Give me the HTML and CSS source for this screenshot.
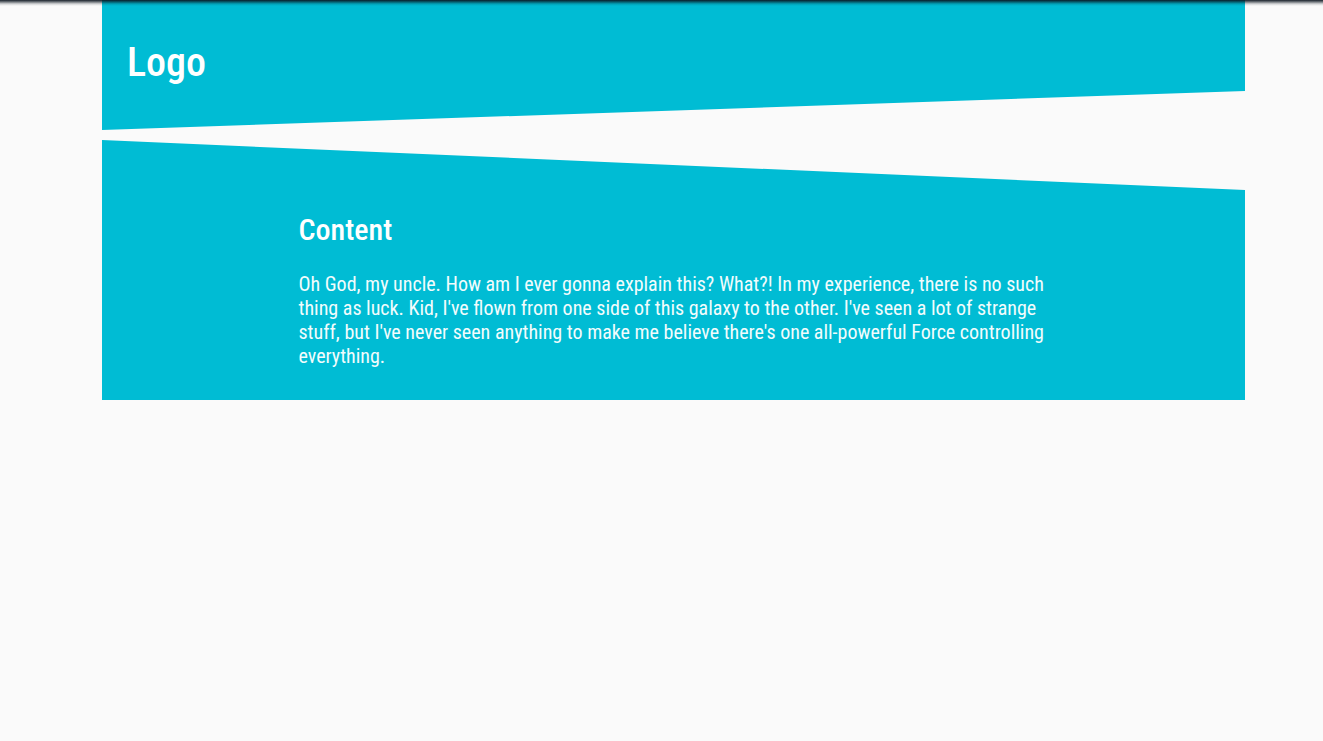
FILE: index.html
```html
<!DOCTYPE html>
<html lang="en">
<head>
<meta charset="utf-8">
<title>Slanted layout</title>
<link rel="stylesheet" href="styles.css">
</head>
<body>
<div class="top-shadow"></div>
<div class="page">
  <header class="header">
    <div class="logo">Logo</div>
  </header>
  <section class="content">
    <div class="inner">
      <h2 class="title">Content</h2>
      <p class="text">Oh God, my uncle. How am I ever gonna explain this? What?! In my experience, there is no such thing as luck. Kid, I've flown from one side of this galaxy to the other. I've seen a lot of strange stuff, but I've never seen anything to make me believe there's one all-powerful Force controlling everything.</p>
    </div>
  </section>
</div>
</body>
</html>
```
FILE: styles.css
```css
html, body {
  margin: 0;
  padding: 0;
  background: #fafafa;
}
body {
  font-family: "Roboto Condensed", Roboto, "Liberation Sans", sans-serif;
  font-stretch: 75%;
  color: #fff;
}
.top-shadow {
  position: fixed;
  top: 0;
  left: 0;
  right: 0;
  height: 6px;
  background: linear-gradient(to bottom, rgba(10, 20, 30, 0.95) 0, rgba(10, 20, 30, 0.55) 2px, rgba(10, 20, 30, 0.15) 4px, rgba(10, 20, 30, 0) 6px);
  z-index: 10;
}
.page {
  width: 1143px;
  margin-left: 102px;
  display: flex;
  flex-direction: column;
  gap: 10px;
}
.header {
  background: #00bcd4;
  height: 130px;
  clip-path: polygon(0 0, 100% 0, 100% 91px, 0 100%);
  padding: 0 25px;
  box-sizing: border-box;
}
.logo {
  font-size: 40px;
  font-weight: 500;
  line-height: 1;
  padding-top: 43px;
}
.content {
  background: #00bcd4;
  height: 260px;
  clip-path: polygon(0 0, 100% 50px, 100% 100%, 0 100%);
  box-sizing: border-box;
  padding-top: 74px;
}
.inner {
  width: 750px;
  margin: 0 auto;
}
.title {
  margin: 0;
  font-size: 30px;
  font-weight: 500;
  line-height: 32px;
}
.text {
  margin: 26px 0 0;
  font-size: 20px;
  line-height: 24px;
  color: #f2fcfd;
}
```
